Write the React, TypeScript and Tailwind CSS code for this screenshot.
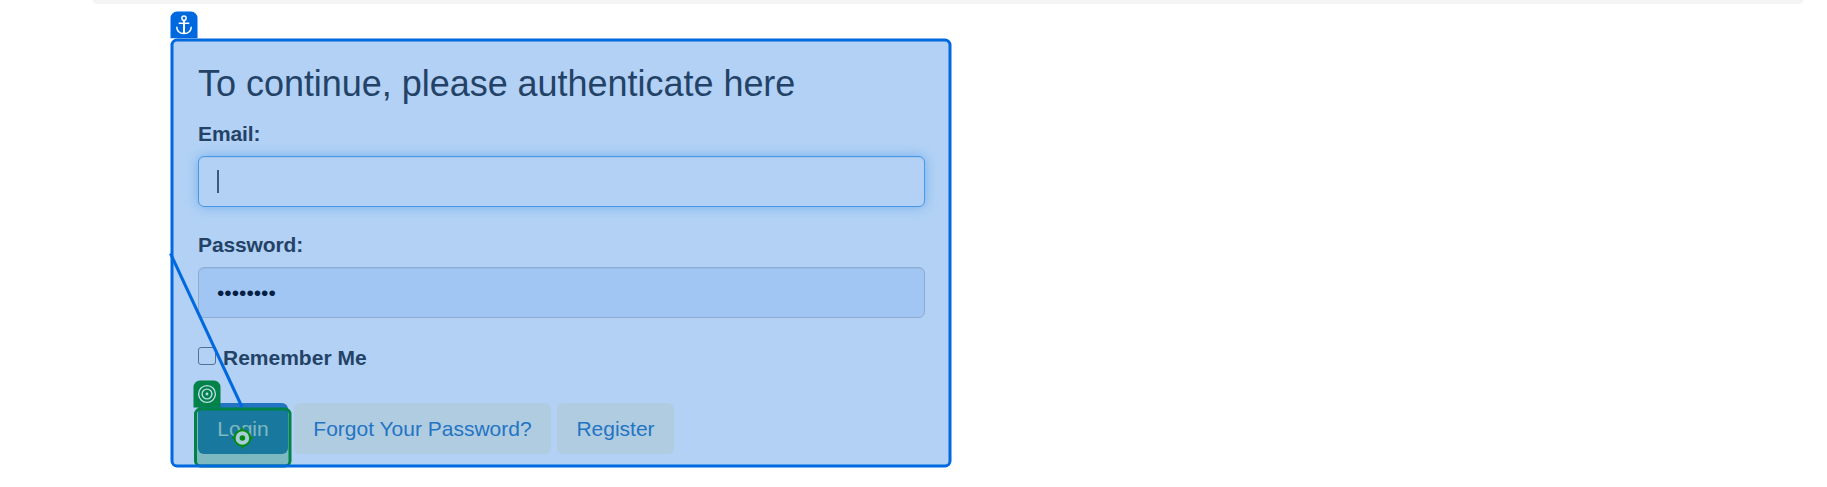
import type { ReactNode } from "react";

function Label({ children }: { children: ReactNode }) {
  return (
    <label className="block h-[30px] pt-px text-[21px] leading-[30px] font-bold tracking-[-0.12px]">{children}</label>
  );
}

function LinkButton({ className, children }: { className: string; children: ReactNode }) {
  return (
    <button className={`h-[51px] rounded-[6px] text-center text-[21px] leading-[30px] ${className}`}>
      {children}
    </button>
  );
}

function Annotations() {
  return (
    <svg className="pointer-events-none absolute top-0 left-0" width="1827" height="487" viewBox="0 0 1827 487" fill="none">
      <rect x="172" y="40" width="778" height="426" rx="5" fill="#0066de" fillOpacity="0.3" />
      <rect x="195.500" y="409" width="94.500" height="57" rx="5" fill="#008248" fillOpacity="0.3" />
      <rect x="195.500" y="409" width="94.500" height="57" rx="5" stroke="#008248" strokeWidth="3" />
      <rect x="172" y="40" width="778" height="426" rx="5" stroke="#0069e0" strokeWidth="3" />
      <path d="M170.500 253.500L242 407" stroke="#0069e0" strokeWidth="3" />
      <path d="M170.500 38.200V18a6.500 6.500 0 0 1 6.500-6.500h14a6.500 6.500 0 0 1 6.500 6.500V38.200z" fill="#0069e0" />
      <g stroke="#fff" strokeWidth="1.500">
        <circle cx="184" cy="18.200" r="2.100" />
        <path d="M184 20.300V33.500" strokeWidth="2" />
        <path d="M178.700 23.200H189.300M176.700 26.700C176.900 30.800 179.700 33.500 184 33.500S191.100 30.800 191.300 26.700" />
      </g>
      <path d="M193.500 407.400V387a6.500 6.500 0 0 1 6.500-6.500h14a6.500 6.500 0 0 1 6.500 6.500V407.400z" fill="#008248" />
      <g stroke="#b9dbe8" strokeWidth="1.400">
        <circle cx="207" cy="394" r="8.400" />
        <circle cx="207" cy="394" r="4.900" />
        <circle cx="207" cy="394" r="0.700" />
      </g>
      <circle cx="242.400" cy="438" r="7.800" fill="#a8cfd8" stroke="#078a14" strokeWidth="2" />
      <circle cx="242.400" cy="438" r="2.800" fill="#078a14" />
      <path d="M242.400 427.500v3M242.400 445.500v3M232 438h3M250 438h3" stroke="#078a14" strokeWidth="2" />
    </svg>
  );
}

export default function App() {
  return (
    <div className="relative h-[487px] w-[1827px] overflow-hidden bg-white font-['Liberation_Sans',Arial,sans-serif] text-[#333]">
      <div className="mr-[24px] ml-[93px] h-1 rounded-b-[4px] bg-[#f4f4f4]" />
      <main className="ml-[198px] w-[727px] pt-[60px]">
        <h1 className="h-[54px] text-[36px] leading-[40px] tracking-[-0.03px] whitespace-nowrap">
          To continue, please authenticate here
        </h1>
        <Label>Email:</Label>
        <div className="mt-2 flex h-[51px] items-center rounded-[6px] border border-[#66afe9] bg-white pl-[18px] shadow-[inset_0_1px_1px_rgba(0,0,0,.075),0_0_12px_rgba(102,175,233,.6)]">
          <span className="h-[23px] w-[2px] bg-[#555]" />
        </div>
        <div className="mt-[22px]">
          <Label>Password:</Label>
          <input
            type="password"
            defaultValue="password"
            className="mt-2 block h-[51px] w-full rounded-[6px] border border-[#ccc] bg-[#e8f0fe] px-[18px] text-[21px] text-black shadow-[inset_0_1px_1px_rgba(0,0,0,.075)]"
          />
        </div>
        <div className="mt-[25px] flex h-[30px] items-center">
          <span className="mb-[4px] h-[18px] w-[18px] rounded-[3px] border border-[#767676] bg-white" />
          <span className="ml-[7px] text-[21px] leading-[30px] font-bold">Remember Me</span>
        </div>
        <div className="mt-[30px] flex gap-[6px]">
          <LinkButton className="w-[90px] bg-[#337ab7] text-white">Login</LinkButton>
          <LinkButton className="w-[257px] bg-[#fcf8e3] text-[#337ab7]">Forgot Your Password?</LinkButton>
          <LinkButton className="w-[117px] bg-[#fcf8e3] text-[#337ab7]">Register</LinkButton>
        </div>
      </main>
      <Annotations />
    </div>
  );
}
